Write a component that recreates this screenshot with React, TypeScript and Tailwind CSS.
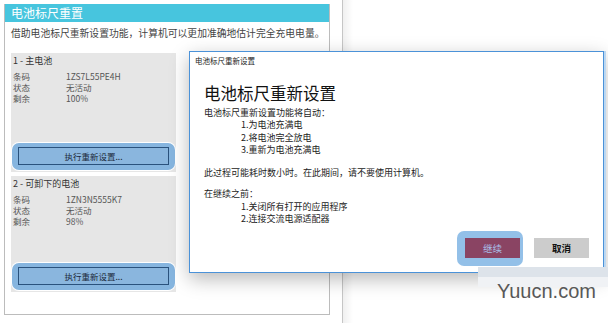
import React from "react";

const font = { fontFamily: '"Noto Sans CJK SC", "Liberation Sans", sans-serif' };

type Battery = {
  title: string;
  code: string;
  state: string;
  left: string;
  height: string;
};

const batteries: Battery[] = [
  { title: "1 - 主电池", code: "1ZS7L55PE4H", state: "无活动", left: "100%", height: "h-[119px]" },
  { title: "2 - 可卸下的电池", code: "1ZN3N5555K7", state: "无活动", left: "98%", height: "h-[116px]" },
];

function ResetButton() {
  return (
    <div className="mx-[1px] mb-[2px] mt-auto rounded-[7px] bg-[#86b5df] px-[6px] pt-[4px] pb-[5px] ring-1 ring-white">
      <div className="flex h-[18px] items-center justify-center border border-[#2a527d] bg-[#8ab6de] text-[8.5px] text-[#1c2a3a]">
        执行重新设置...
      </div>
    </div>
  );
}

function BatteryCard({ b }: { b: Battery }) {
  return (
    <div className={`flex w-[165px] flex-col bg-[#e6e6e6] ${b.height}`}>
      <div className="px-[2px] pt-[1px] text-[9px] leading-[13px] text-[#333]">{b.title}</div>
      <div className="mt-[4px] px-[2px] text-[8.5px] leading-[11px] text-[#555]">
        {[
          ["条码", b.code],
          ["状态", b.state],
          ["剩余", b.left],
        ].map(([k, v]) => (
          <div key={k} className="flex h-[11px] items-center">
            <span className="w-[53px]">{k}</span>
            <span>{v}</span>
          </div>
        ))}
      </div>
      <ResetButton />
    </div>
  );
}

export default function App() {
  return (
    <div className="relative h-[323px] w-[608px] overflow-hidden bg-white" style={font}>
      {/* window edge behind */}
      <div className="absolute left-[342px] top-0 h-full w-px bg-[#c6c6c6]" />
      <div className="absolute left-[343px] top-0 h-full w-[10px] bg-gradient-to-r from-[#f0f0f0] to-white" />

      {/* left window */}
      <div className="absolute left-[4px] top-[4px] flex h-[311px] w-[326px] flex-col border-x border-b border-[#bcbcbc] bg-white">
        <div className="flex h-[18px] items-center bg-[#47c5de] pl-[6px] text-[12px] text-white">电池标尺重置</div>
        <div className="mt-[5px] whitespace-nowrap pl-[6px] text-[9.8px] leading-[13px] text-[#444]">
          借助电池标尺重新设置功能，计算机可以更加准确地估计完全充电电量。
        </div>
        <div className="mt-[13px] flex flex-col gap-[4px] pl-[6px]">
          {batteries.map((b) => (
            <BatteryCard key={b.title} b={b} />
          ))}
        </div>
      </div>

      {/* dialog */}
      <div className="absolute left-[189px] top-[51px] flex h-[222px] w-[415px] flex-col border border-[#4b92d8] bg-white shadow-[2px_0_0_#bcd8f2,0_6px_18px_rgba(0,0,0,0.28)]">
        <div className="pl-[5px] pt-[3px] text-[7.5px] leading-[12px] text-[#222]">电池标尺重新设置</div>
        <div className="mt-[14px] pl-[14px] text-[16.5px] leading-[24px] text-[#111]">电池标尺重新设置</div>
        <div className="mt-[2px] pl-[14px] text-[9px] leading-[12.3px] text-[#222]">
          <div>电池标尺重新设置功能将自动：</div>
          <div className="pl-[37px]">
            <div>1.为电池充满电</div>
            <div>2.将电池完全放电</div>
            <div>3.重新为电池充满电</div>
          </div>
          <div className="mt-[11px]">此过程可能耗时数小时。在此期间，请不要使用计算机。</div>
          <div className="mt-[9px]">在继续之前：</div>
          <div className="pl-[37px]">
            <div>1.关闭所有打开的应用程序</div>
            <div>2.连接交流电源适配器</div>
          </div>
        </div>
        <div className="mt-auto mb-[6px] flex items-start justify-end pr-[14px]">
          <div className="rounded-[7px] bg-[#93c0e8] pl-[8px] pr-[3px] pt-[7px] pb-[8px] ring-1 ring-white">
            <div className="flex h-[20px] w-[55px] items-center justify-center bg-[#8a4463] text-[9.5px] text-[#a9bde6]">
              继续
            </div>
          </div>
          <div className="ml-[11px] mt-[7px] flex h-[20px] w-[55px] items-center justify-center bg-[#cccccc] text-[9.5px] font-bold text-[#111]">
            取消
          </div>
        </div>
      </div>

      {/* watermark */}
      <div className="absolute left-[478px] top-[267px] flex h-[20px] w-[130px] flex-col">
        <div className="h-[10px] bg-[#dde3ea]" />
        <div className="h-[10px] bg-[#f0f2f5]" />
      </div>
      <div
        className="absolute left-[497px] top-[279px] text-[20px] leading-[24px] text-[#585858]"
        style={{ fontFamily: '"Liberation Sans", sans-serif' }}
      >
        Yuucn.com
      </div>
    </div>
  );
}
